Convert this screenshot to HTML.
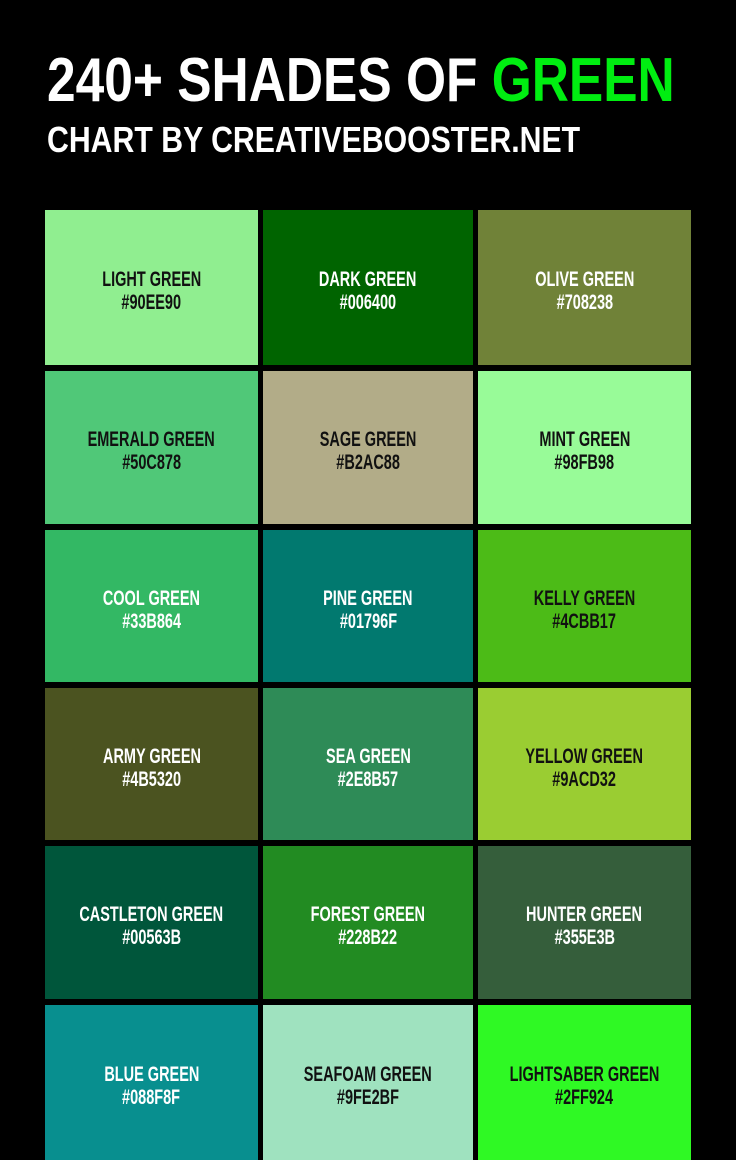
<!DOCTYPE html>
<html><head><meta charset="utf-8"><style>
html,body{margin:0;padding:0;background:#000;}
body{width:736px;height:1160px;position:relative;overflow:hidden;font-family:"Liberation Sans",sans-serif;}
.t{position:absolute;left:47px;top:46px;font-weight:bold;font-size:62px;color:#fff;white-space:nowrap;transform-origin:0 0;transform:scaleX(0.83);line-height:70px;}
.t span{color:#00ee11;}
.s{position:absolute;left:47px;top:119px;font-weight:bold;font-size:36px;color:#fff;white-space:nowrap;transform-origin:0 0;transform:scaleX(0.84);line-height:42px;}
.c{position:absolute;box-sizing:border-box;padding-top:7px;display:flex;flex-direction:column;justify-content:center;align-items:center;font-weight:bold;font-size:21px;line-height:23px;text-align:center;}
.c b{display:block;white-space:nowrap;transform:scaleX(0.69);}
.d{color:#111;}.w{color:#fff;}
</style></head><body>
<div class="t">240+ SHADES OF <span>GREEN</span></div>
<div class="s">CHART BY CREATIVEBOOSTER.NET</div>

<div class="c d" style="left:45px;top:210px;width:213px;height:155px;background:#90EE90"><b>LIGHT GREEN</b><b>#90EE90</b></div>
<div class="c w" style="left:263px;top:210px;width:210px;height:155px;background:#006400"><b>DARK GREEN</b><b>#006400</b></div>
<div class="c w" style="left:478px;top:210px;width:213px;height:155px;background:#708238"><b>OLIVE GREEN</b><b>#708238</b></div>

<div class="c d" style="left:45px;top:371px;width:213px;height:153px;background:#50C878"><b>EMERALD GREEN</b><b>#50C878</b></div>
<div class="c d" style="left:263px;top:371px;width:210px;height:153px;background:#B2AC88"><b>SAGE GREEN</b><b>#B2AC88</b></div>
<div class="c d" style="left:478px;top:371px;width:213px;height:153px;background:#98FB98"><b>MINT GREEN</b><b>#98FB98</b></div>

<div class="c w" style="left:45px;top:530px;width:213px;height:152px;background:#33B864"><b>COOL GREEN</b><b>#33B864</b></div>
<div class="c w" style="left:263px;top:530px;width:210px;height:152px;background:#01796F"><b>PINE GREEN</b><b>#01796F</b></div>
<div class="c d" style="left:478px;top:530px;width:213px;height:152px;background:#4CBB17"><b>KELLY GREEN</b><b>#4CBB17</b></div>

<div class="c w" style="left:45px;top:688px;width:213px;height:152px;background:#4B5320"><b>ARMY GREEN</b><b>#4B5320</b></div>
<div class="c w" style="left:263px;top:688px;width:210px;height:152px;background:#2E8B57"><b>SEA GREEN</b><b>#2E8B57</b></div>
<div class="c d" style="left:478px;top:688px;width:213px;height:152px;background:#9ACD32"><b>YELLOW GREEN</b><b>#9ACD32</b></div>

<div class="c w" style="left:45px;top:846px;width:213px;height:153px;background:#00563B"><b>CASTLETON GREEN</b><b>#00563B</b></div>
<div class="c w" style="left:263px;top:846px;width:210px;height:153px;background:#228B22"><b>FOREST GREEN</b><b>#228B22</b></div>
<div class="c w" style="left:478px;top:846px;width:213px;height:153px;background:#355E3B"><b>HUNTER GREEN</b><b>#355E3B</b></div>

<div class="c w" style="left:45px;top:1005px;width:213px;height:155px;background:#088F8F"><b>BLUE GREEN</b><b>#088F8F</b></div>
<div class="c d" style="left:263px;top:1005px;width:210px;height:155px;background:#9FE2BF"><b>SEAFOAM GREEN</b><b>#9FE2BF</b></div>
<div class="c d" style="left:478px;top:1005px;width:213px;height:155px;background:#2FF924"><b>LIGHTSABER GREEN</b><b>#2FF924</b></div>
</body></html>
